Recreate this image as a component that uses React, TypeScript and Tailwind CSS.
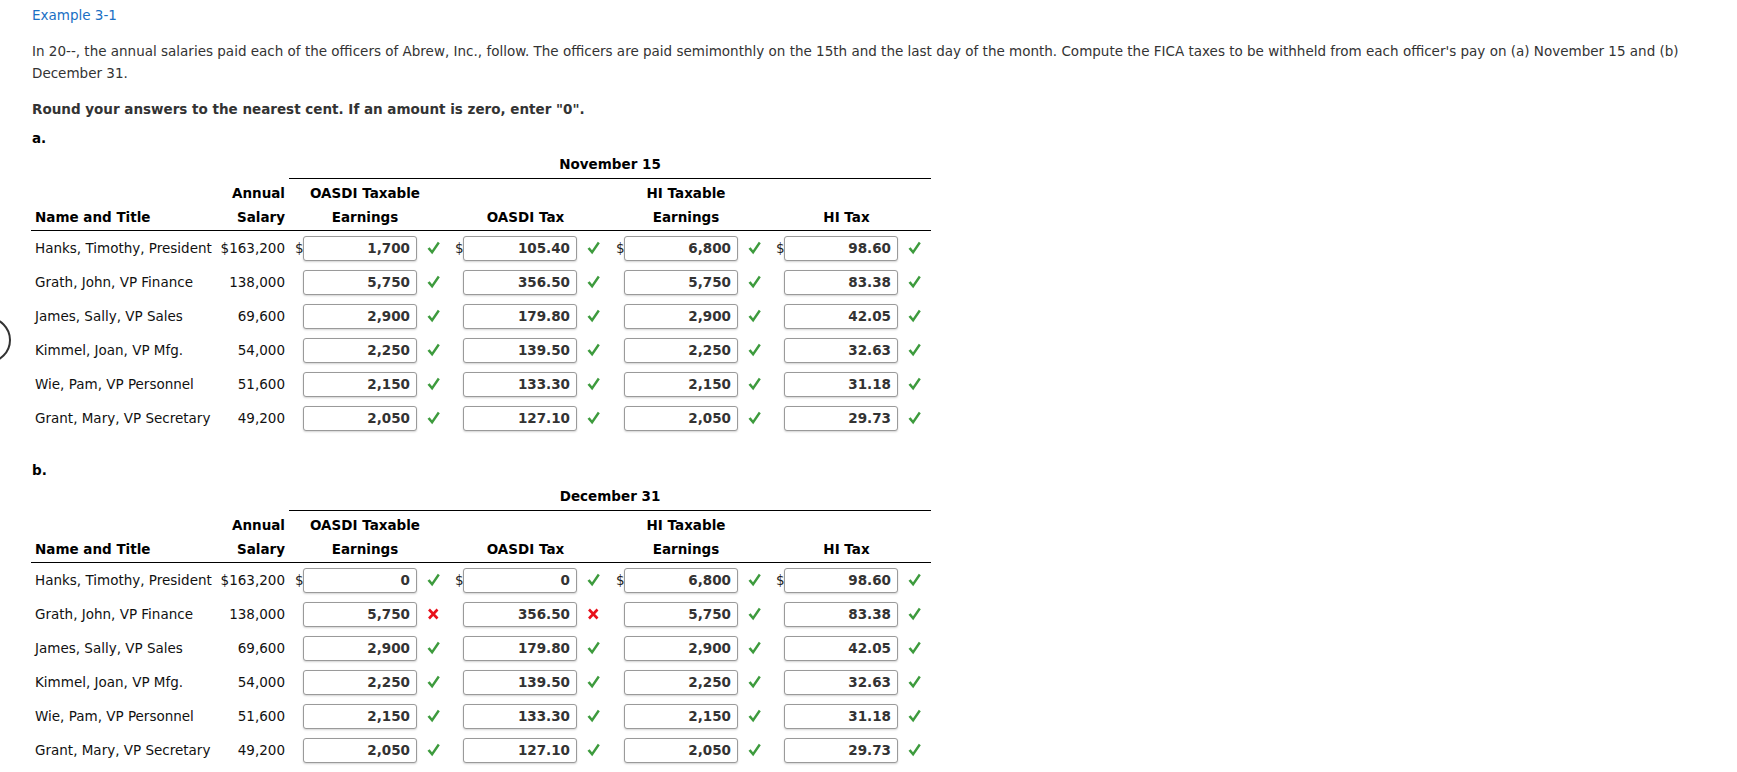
import React from "react";

type Mark = "ok" | "bad";
type Row = { name: string; salary: string; vals: [string, Mark][] };

const rowsA: Row[] = [
  { name: "Hanks, Timothy, President", salary: "$163,200", vals: [["1,700", "ok"], ["105.40", "ok"], ["6,800", "ok"], ["98.60", "ok"]] },
  { name: "Grath, John, VP Finance", salary: "138,000", vals: [["5,750", "ok"], ["356.50", "ok"], ["5,750", "ok"], ["83.38", "ok"]] },
  { name: "James, Sally, VP Sales", salary: "69,600", vals: [["2,900", "ok"], ["179.80", "ok"], ["2,900", "ok"], ["42.05", "ok"]] },
  { name: "Kimmel, Joan, VP Mfg.", salary: "54,000", vals: [["2,250", "ok"], ["139.50", "ok"], ["2,250", "ok"], ["32.63", "ok"]] },
  { name: "Wie, Pam, VP Personnel", salary: "51,600", vals: [["2,150", "ok"], ["133.30", "ok"], ["2,150", "ok"], ["31.18", "ok"]] },
  { name: "Grant, Mary, VP Secretary", salary: "49,200", vals: [["2,050", "ok"], ["127.10", "ok"], ["2,050", "ok"], ["29.73", "ok"]] },
];

const rowsB: Row[] = [
  { name: "Hanks, Timothy, President", salary: "$163,200", vals: [["0", "ok"], ["0", "ok"], ["6,800", "ok"], ["98.60", "ok"]] },
  { name: "Grath, John, VP Finance", salary: "138,000", vals: [["5,750", "bad"], ["356.50", "bad"], ["5,750", "ok"], ["83.38", "ok"]] },
  { name: "James, Sally, VP Sales", salary: "69,600", vals: [["2,900", "ok"], ["179.80", "ok"], ["2,900", "ok"], ["42.05", "ok"]] },
  { name: "Kimmel, Joan, VP Mfg.", salary: "54,000", vals: [["2,250", "ok"], ["139.50", "ok"], ["2,250", "ok"], ["32.63", "ok"]] },
  { name: "Wie, Pam, VP Personnel", salary: "51,600", vals: [["2,150", "ok"], ["133.30", "ok"], ["2,150", "ok"], ["31.18", "ok"]] },
  { name: "Grant, Mary, VP Secretary", salary: "49,200", vals: [["2,050", "ok"], ["127.10", "ok"], ["2,050", "ok"], ["29.73", "ok"]] },
];

function Check() {
  return (
    <svg width="13" height="14" viewBox="0 0 13 14" className="block">
      <path d="M0.5 7.8 L2.6 6.2 L5 9.2 L10.8 0.8 L12.8 2.2 L5.2 13.2 Z" fill="#3d9b3d" />
    </svg>
  );
}

function Cross() {
  return (
    <svg width="13" height="14" viewBox="0 0 13 14" className="block">
      <path d="M2 2.5 L10.5 11.5 M10.5 2.5 L2 11.5" stroke="#e8101a" strokeWidth="2.6" strokeLinecap="butt" />
    </svg>
  );
}

function ValCell({ v, mark, dollar }: { v: string; mark: Mark; dollar: boolean }) {
  return (
    <div className="flex items-center pl-[6px]">
      <span className="w-[8px] text-[13.5px] text-[#222]">{dollar ? "$" : ""}</span>
      <div className="w-[114px] h-[25px] border border-[#9a9a9a] rounded-[3px] bg-white shadow-[0_1px_2px_rgba(0,0,0,0.18)] flex items-center justify-end pr-[6px] font-bold text-[13.5px] text-[#333]">
        {v}
      </div>
      <span className="ml-[10px] flex items-center">{mark === "ok" ? <Check /> : <Cross />}</span>
    </div>
  );
}

function Section({ label, date, rows }: { label: string; date: string; rows: Row[] }) {
  return (
    <div>
      <div className="font-bold text-[13.5px] leading-[20px] text-black">{label}</div>
      <div className="ml-[-1px] mt-[6px] w-[900px] text-black">
        <div className="grid grid-cols-[186px_72px_642px]">
          <div></div>
          <div></div>
          <div className="text-center font-bold text-[13.5px] leading-[20px] pb-[4px] border-b border-black">{date}</div>
        </div>
        <div className="grid grid-cols-[186px_72px_160px_161px_160px_161px] border-b border-black font-bold text-[13.5px] leading-[24px] pt-[2px] pb-[1px] items-end">
          <div className="pl-[4px]">Name and Title</div>
          <div className="text-right pr-[4px]">Annual<br />Salary</div>
          <div className="text-center pr-[8px]">OASDI Taxable<br />Earnings</div>
          <div className="text-center pr-[8px]">OASDI Tax</div>
          <div className="text-center pr-[8px]">HI Taxable<br />Earnings</div>
          <div className="text-center pr-[8px]">HI Tax</div>
        </div>
        {rows.map((r, i) => (
          <div key={i} className="grid grid-cols-[186px_72px_160px_161px_160px_161px] h-[34px] items-center text-[13.5px] text-[#111]">
            <div className="pl-[4px] whitespace-nowrap">{r.name}</div>
            <div className="text-right pr-[4px] whitespace-nowrap">{r.salary}</div>
            {r.vals.map(([v, m], j) => (
              <ValCell key={j} v={v} mark={m} dollar={i === 0} />
            ))}
          </div>
        ))}
      </div>
    </div>
  );
}

export default function App() {
  return (
    <div className="relative w-[1737px] h-[772px] overflow-hidden bg-white" style={{ fontFamily: '"DejaVu Sans", Verdana, sans-serif' }}>
      <div className="absolute left-[-35px] top-[317px] w-[46px] h-[46px] rounded-full border-2 border-[#333]"></div>
      <div className="pl-[32px] pt-[5px]">
        <div className="text-[13.5px] leading-[20px] text-[#1a6fc4]">Example 3-1</div>
        <p className="mt-[15px] w-[1690px] text-[13.5px] leading-[22px] text-[#333]">
          In 20--, the annual salaries paid each of the officers of Abrew, Inc., follow. The officers are paid semimonthly on the 15th and the last day of the month. Compute the FICA taxes to be withheld from each officer's pay on (a) November 15 and (b) December 31.
        </p>
        <div className="mt-[15px] font-bold text-[13.5px] leading-[20px] text-[#333]">
          Round your answers to the nearest cent. If an amount is zero, enter "0".
        </div>
        <div className="mt-[9px]">
          <Section label="a." date="November 15" rows={rowsA} />
        </div>
        <div className="mt-[25px]">
          <Section label="b." date="December 31" rows={rowsB} />
        </div>
      </div>
    </div>
  );
}
